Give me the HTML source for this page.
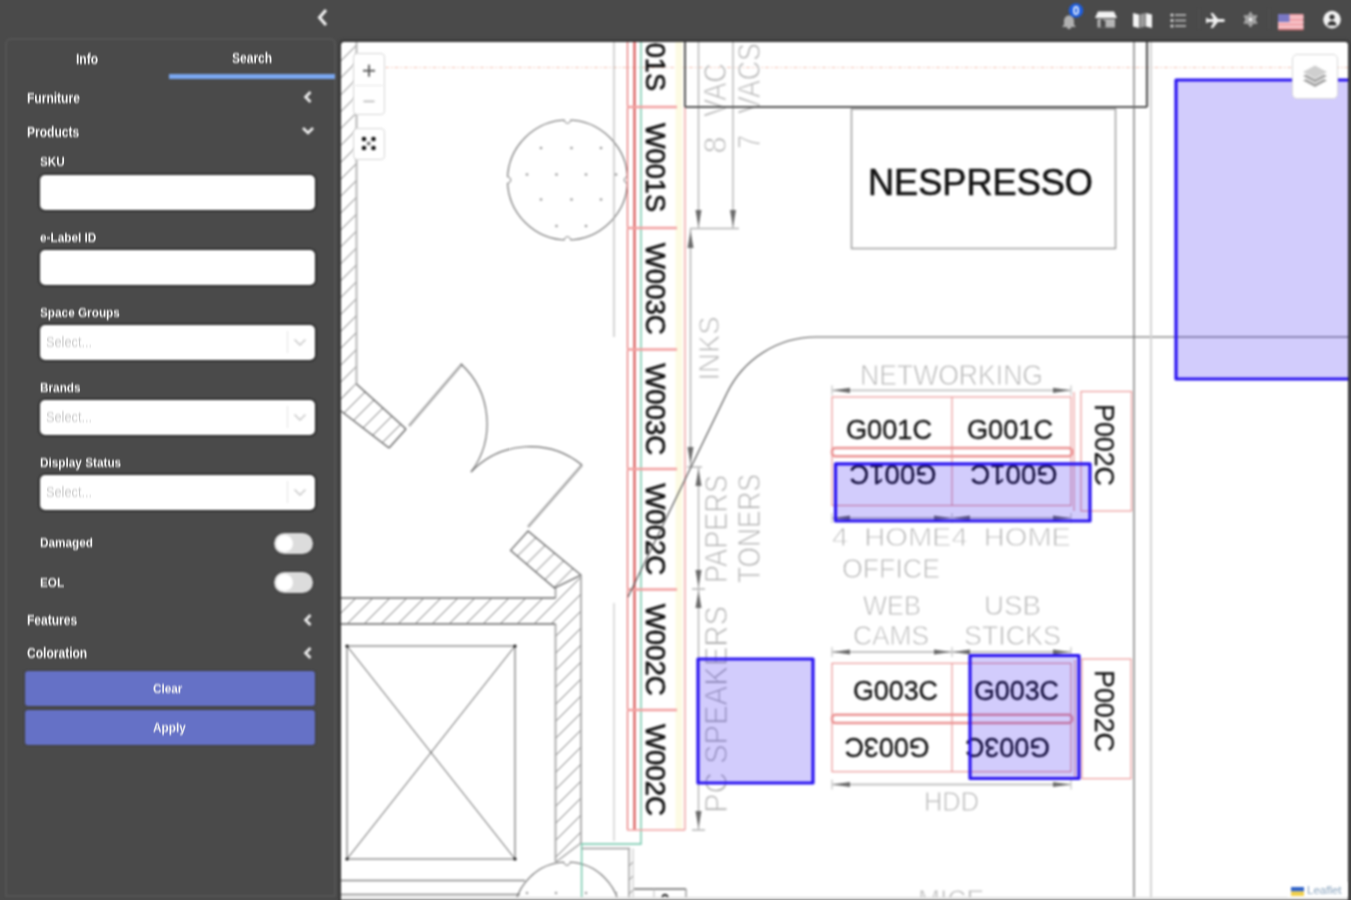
<!DOCTYPE html>
<html><head><meta charset="utf-8">
<style>
*{box-sizing:border-box;margin:0;padding:0}
body>*{filter:blur(0.9px)}
html,body{width:1351px;height:900px;overflow:hidden;background:#4a4a4a;font-family:"Liberation Sans",sans-serif;color:#fff;position:relative}
.abs{position:absolute}
.panel{position:absolute;left:4.5px;top:38px;width:331px;height:859px;border:2px solid #555;border-radius:6px 6px 0 0}
.t{position:absolute;line-height:14px;white-space:nowrap;transform-origin:0 50%}
.inp{position:absolute;left:40px;width:275px;height:35px;background:#fff;border-radius:5px;box-shadow:0 0 0 1.6px #262626}
.tog{position:absolute;left:273.5px;width:39px;height:21px;border-radius:11px;background:#dcdcdc;box-shadow:0 0 0 1px #3c3c3c}
.tog:after{content:"";position:absolute;left:2px;top:2px;width:17px;height:17px;border-radius:50%;background:#fff}
.btn{position:absolute;left:24.5px;width:290px;height:34.5px;background:#6571c6;border-radius:3px;box-shadow:0 0 0 1px #3e3e3e}
.map{position:absolute;left:341px;top:42px;width:1006.5px;height:858px;background:#fff;border-radius:3px 3px 0 0;overflow:hidden;box-shadow:0 0 2px 1.5px #333}
</style></head>
<body>
<!-- top collapse chevron -->
<svg class="abs" style="left:316px;top:8px" width="14" height="20" viewBox="0 0 14 20"><path d="M10 2 L3.5 9.5 L10 17" fill="none" stroke="#f4f4f4" stroke-width="3"/></svg>

<!-- top icons -->
<svg class="abs" style="left:1040px;top:0" width="311" height="40" viewBox="1040 0 311 40">
  <!-- bell -->
  <path d="M1069,15.5 c-3.2,0 -5,2.6 -5,5.6 v3.6 l-2,2.2 h14 l-2,-2.2 v-3.6 c0,-3 -1.8,-5.6 -5,-5.6z" fill="#b0b0b0"/>
  <rect x="1067" y="26.5" width="4" height="2.5" rx="1.2" fill="#b0b0b0"/>
  <circle cx="1076" cy="10.5" r="7.2" fill="#1f5fe0"/>
  <text x="1076" y="14.6" font-size="12" font-weight="bold" fill="#fff" text-anchor="middle" font-family="Liberation Sans, sans-serif">0</text>
  <!-- store -->
  <path d="M1098,11.5 h16 l3,6.5 h-22z" fill="#f2f2f2"/>
  <rect x="1097.5" y="19" width="17.5" height="8.5" fill="#b5b5b5"/>
  <rect x="1100.5" y="20.5" width="5" height="7" fill="#4a4a4a"/>
  <circle cx="1102" cy="20.5" r="1" fill="#222"/>
  <!-- map -->
  <path d="M1133,13 l6,1.5 v13.5 l-6,-1.5z" fill="#f4f4f4"/>
  <path d="M1139.6,14.5 l5.6,-1.5 v13.5 l-5.6,1.5z" fill="#9a9a9a"/>
  <path d="M1145.8,13 l6.2,1.5 v13.5 l-6.2,-1.5z" fill="#f4f4f4"/>
  <!-- list -->
  <circle cx="1172" cy="15" r="1.6" fill="#ddd"/><rect x="1175" y="14" width="11" height="2" fill="#aaa"/>
  <circle cx="1172" cy="20.5" r="1.6" fill="#ddd"/><rect x="1175" y="19.5" width="11" height="2" fill="#aaa"/>
  <circle cx="1172" cy="26" r="1.6" fill="#ddd"/><rect x="1175" y="25" width="11" height="2" fill="#aaa"/>
  <rect x="1198.5" y="9" width="1" height="20" fill="#555"/>
  <!-- plane -->
  <path d="M1206,17.5 l2.5,1.5 h5 l-3,-6 h2.5 l5,6 h4.5 c1.5,0 2.5,0.7 2.5,1.5 s-1,1.5 -2.5,1.5 h-4.5 l-5,6 h-2.5 l3,-6 h-5 l-2.5,1.5z" fill="#f2f2f2"/>
  <!-- gear -->
  <g fill="none" stroke="#a8a8a8" stroke-width="2.2">
   <circle cx="1250.5" cy="19.5" r="4.5"/>
  </g>
  <g stroke="#a8a8a8" stroke-width="2.4">
   <line x1="1250.5" y1="12" x2="1250.5" y2="27"/>
   <line x1="1244" y1="15.8" x2="1257" y2="23.2"/>
   <line x1="1244" y1="23.2" x2="1257" y2="15.8"/>
  </g>
  <circle cx="1250.5" cy="19.5" r="2" fill="#eee"/>
  <rect x="1268.5" y="9" width="1" height="20" fill="#555"/>
  <!-- flag -->
  <rect x="1278" y="14" width="25.5" height="16" fill="#f2a6ad"/>
  <rect x="1278" y="16.5" width="25.5" height="1.6" fill="#f8d0d4"/>
  <rect x="1278" y="21.5" width="25.5" height="1.6" fill="#f8d0d4"/>
  <rect x="1278" y="26" width="25.5" height="1.6" fill="#f8d0d4"/>
  <rect x="1278" y="14" width="11.5" height="8" fill="#7a78c4"/>
  <rect x="1278" y="29.5" width="25.5" height="1" fill="#9a5050"/>
  <!-- user -->
  <circle cx="1332" cy="19.6" r="8.8" fill="#f4f4f4"/>
  <circle cx="1332" cy="17" r="2.6" fill="#333"/>
  <path d="M1327.5,25.5 c0,-3 2,-4.5 4.5,-4.5 s4.5,1.5 4.5,4.5z" fill="#333"/>
</svg>

<div class="panel"></div>
<div class="t" style="left:76px;top:52.35px;font-size:14px;color:#f4f4f4;font-weight:bold;transform:scaleX(0.86);">Info</div>
<div class="t" style="left:232.3px;top:51.35px;font-size:14px;color:#f4f4f4;font-weight:bold;transform:scaleX(0.86);">Search</div>
<div class="abs" style="left:169px;top:74px;width:166px;height:5px;background:#7aa7f0"></div>
<div class="t" style="left:26.7px;top:91.45px;font-size:14px;color:#f4f4f4;font-weight:bold;transform:scaleX(0.86);">Furniture</div>
<div class="t" style="left:26.7px;top:125.45px;font-size:14px;color:#f4f4f4;font-weight:bold;transform:scaleX(0.86);">Products</div>
<div class="t" style="left:40px;top:154.95px;font-size:13.7px;color:#f4f4f4;font-weight:bold;transform:scaleX(0.86);">SKU</div>
<div class="inp" style="top:174.5px"></div>
<div class="t" style="left:40px;top:231.05px;font-size:13.7px;color:#f4f4f4;font-weight:bold;transform:scaleX(0.86);">e-Label ID</div>
<div class="inp" style="top:249.5px"></div>
<div class="t" style="left:40px;top:305.55px;font-size:13.7px;color:#f4f4f4;font-weight:bold;transform:scaleX(0.86);">Space Groups</div>
<div class="inp" style="top:324.5px"></div>
<div class="t" style="left:40px;top:380.75px;font-size:13.7px;color:#f4f4f4;font-weight:bold;transform:scaleX(0.86);">Brands</div>
<div class="inp" style="top:399.5px"></div>
<div class="t" style="left:40px;top:456.25px;font-size:13.7px;color:#f4f4f4;font-weight:bold;transform:scaleX(0.86);">Display Status</div>
<div class="inp" style="top:474.5px"></div>
<div class="t" style="left:46px;top:334.65px;font-size:14.5px;color:#cacaca;font-weight:normal;transform:scaleX(0.88);">Select...</div>
<div class="abs" style="left:287px;top:330.5px;width:1px;height:22px;background:#e4e4e4"></div>
<div class="t" style="left:46px;top:409.65px;font-size:14.5px;color:#cacaca;font-weight:normal;transform:scaleX(0.88);">Select...</div>
<div class="abs" style="left:287px;top:405.5px;width:1px;height:22px;background:#e4e4e4"></div>
<div class="t" style="left:46px;top:484.65px;font-size:14.5px;color:#cacaca;font-weight:normal;transform:scaleX(0.88);">Select...</div>
<div class="abs" style="left:287px;top:480.5px;width:1px;height:22px;background:#e4e4e4"></div>
<div class="t" style="left:40px;top:536.45px;font-size:13.7px;color:#f4f4f4;font-weight:bold;transform:scaleX(0.86);">Damaged</div>
<div class="tog" style="top:532.5px"></div>
<div class="t" style="left:40px;top:576.05px;font-size:13.7px;color:#f4f4f4;font-weight:bold;transform:scaleX(0.86);">EOL</div>
<div class="tog" style="top:572px"></div>
<div class="t" style="left:26.7px;top:613.35px;font-size:14px;color:#f4f4f4;font-weight:bold;transform:scaleX(0.86);">Features</div>
<div class="t" style="left:26.7px;top:646.15px;font-size:14px;color:#f4f4f4;font-weight:bold;transform:scaleX(0.86);">Coloration</div>
<div class="btn" style="top:671px"></div>
<div class="t" style="left:152.5px;top:681.65px;font-size:13.7px;color:#f4f4f4;font-weight:bold;transform:scaleX(0.86);">Clear</div>
<div class="btn" style="top:710px"></div>
<div class="t" style="left:152.5px;top:720.55px;font-size:13.7px;color:#f4f4f4;font-weight:bold;transform:scaleX(0.86);">Apply</div>

<div class="map"><svg style="position:absolute;left:-341px;top:-42px" width="1351" height="900" font-family="Liberation Sans, sans-serif">
<defs><pattern id="h45" patternUnits="userSpaceOnUse" width="17" height="17"><path d="M-17,17 L0,0 M0,17 L17,0 M17,17 L34,0" stroke="#7a7a7a" stroke-width="1"/></pattern><clipPath id="wallclip"><polygon points="341,598 555.5,598 555.5,590 581,577 581,843 555.5,862 555.5,624 341,624"/></clipPath></defs>
<line x1="385" y1="67.5" x2="1349" y2="67.5" stroke="#f4c4b4" stroke-width="1" stroke-dasharray="4 2 1.5 2"/>
<clipPath id="c2"><polygon points="341,42 356.5,42 356.5,384 341,397.5"/></clipPath><g clip-path="url(#c2)" stroke="#6e6e6e" stroke-width="1">
<line x1="-31.6" y1="399.5" x2="327.9" y2="40.0"/>
<line x1="-14.7" y1="399.5" x2="344.8" y2="40.0"/>
<line x1="2.2" y1="399.5" x2="361.7" y2="40.0"/>
<line x1="19.1" y1="399.5" x2="378.6" y2="40.0"/>
<line x1="36.0" y1="399.5" x2="395.5" y2="40.0"/>
<line x1="52.9" y1="399.5" x2="412.4" y2="40.0"/>
<line x1="69.8" y1="399.5" x2="429.3" y2="40.0"/>
<line x1="86.7" y1="399.5" x2="446.2" y2="40.0"/>
<line x1="103.6" y1="399.5" x2="463.1" y2="40.0"/>
<line x1="120.5" y1="399.5" x2="480.0" y2="40.0"/>
<line x1="137.4" y1="399.5" x2="496.9" y2="40.0"/>
<line x1="154.3" y1="399.5" x2="513.8" y2="40.0"/>
<line x1="171.2" y1="399.5" x2="530.7" y2="40.0"/>
<line x1="188.1" y1="399.5" x2="547.6" y2="40.0"/>
<line x1="205.0" y1="399.5" x2="564.5" y2="40.0"/>
<line x1="221.9" y1="399.5" x2="581.4" y2="40.0"/>
<line x1="238.8" y1="399.5" x2="598.3" y2="40.0"/>
<line x1="255.7" y1="399.5" x2="615.2" y2="40.0"/>
<line x1="272.6" y1="399.5" x2="632.1" y2="40.0"/>
<line x1="289.5" y1="399.5" x2="649.0" y2="40.0"/>
<line x1="306.4" y1="399.5" x2="665.9" y2="40.0"/>
<line x1="323.3" y1="399.5" x2="682.8" y2="40.0"/>
<line x1="340.2" y1="399.5" x2="699.7" y2="40.0"/>
</g>
<clipPath id="c27"><polygon points="341,397.5 356.5,384 406,429 389,448 341,411"/></clipPath><g clip-path="url(#c27)" stroke="#6e6e6e" stroke-width="1">
<line x1="273.0" y1="450.0" x2="341.0" y2="382.0"/>
<line x1="290.0" y1="450.0" x2="358.0" y2="382.0"/>
<line x1="307.0" y1="450.0" x2="375.0" y2="382.0"/>
<line x1="324.0" y1="450.0" x2="392.0" y2="382.0"/>
<line x1="341.0" y1="450.0" x2="409.0" y2="382.0"/>
<line x1="358.0" y1="450.0" x2="426.0" y2="382.0"/>
<line x1="375.0" y1="450.0" x2="443.0" y2="382.0"/>
<line x1="392.0" y1="450.0" x2="460.0" y2="382.0"/>
</g>
<clipPath id="c37"><polygon points="528,531 581,575 554.5,588 510.6,550.4"/></clipPath><g clip-path="url(#c37)" stroke="#6e6e6e" stroke-width="1">
<line x1="449.5" y1="590.0" x2="510.5" y2="529.0"/>
<line x1="466.5" y1="590.0" x2="527.5" y2="529.0"/>
<line x1="483.5" y1="590.0" x2="544.5" y2="529.0"/>
<line x1="500.5" y1="590.0" x2="561.5" y2="529.0"/>
<line x1="517.5" y1="590.0" x2="578.5" y2="529.0"/>
<line x1="534.5" y1="590.0" x2="595.5" y2="529.0"/>
<line x1="551.5" y1="590.0" x2="612.5" y2="529.0"/>
<line x1="568.5" y1="590.0" x2="629.5" y2="529.0"/>
</g>
<clipPath id="c47"><polygon points="341,598 555.5,598 555.5,588 581,575 581,843 555.5,862 555.5,624 341,624"/></clipPath><g clip-path="url(#c47)" stroke="#6e6e6e" stroke-width="1">
<line x1="39.0" y1="864.0" x2="330.0" y2="573.0"/>
<line x1="56.0" y1="864.0" x2="347.0" y2="573.0"/>
<line x1="73.0" y1="864.0" x2="364.0" y2="573.0"/>
<line x1="90.0" y1="864.0" x2="381.0" y2="573.0"/>
<line x1="107.0" y1="864.0" x2="398.0" y2="573.0"/>
<line x1="124.0" y1="864.0" x2="415.0" y2="573.0"/>
<line x1="141.0" y1="864.0" x2="432.0" y2="573.0"/>
<line x1="158.0" y1="864.0" x2="449.0" y2="573.0"/>
<line x1="175.0" y1="864.0" x2="466.0" y2="573.0"/>
<line x1="192.0" y1="864.0" x2="483.0" y2="573.0"/>
<line x1="209.0" y1="864.0" x2="500.0" y2="573.0"/>
<line x1="226.0" y1="864.0" x2="517.0" y2="573.0"/>
<line x1="243.0" y1="864.0" x2="534.0" y2="573.0"/>
<line x1="260.0" y1="864.0" x2="551.0" y2="573.0"/>
<line x1="277.0" y1="864.0" x2="568.0" y2="573.0"/>
<line x1="294.0" y1="864.0" x2="585.0" y2="573.0"/>
<line x1="311.0" y1="864.0" x2="602.0" y2="573.0"/>
<line x1="328.0" y1="864.0" x2="619.0" y2="573.0"/>
<line x1="345.0" y1="864.0" x2="636.0" y2="573.0"/>
<line x1="362.0" y1="864.0" x2="653.0" y2="573.0"/>
<line x1="379.0" y1="864.0" x2="670.0" y2="573.0"/>
<line x1="396.0" y1="864.0" x2="687.0" y2="573.0"/>
<line x1="413.0" y1="864.0" x2="704.0" y2="573.0"/>
<line x1="430.0" y1="864.0" x2="721.0" y2="573.0"/>
<line x1="447.0" y1="864.0" x2="738.0" y2="573.0"/>
<line x1="464.0" y1="864.0" x2="755.0" y2="573.0"/>
<line x1="481.0" y1="864.0" x2="772.0" y2="573.0"/>
<line x1="498.0" y1="864.0" x2="789.0" y2="573.0"/>
<line x1="515.0" y1="864.0" x2="806.0" y2="573.0"/>
<line x1="532.0" y1="864.0" x2="823.0" y2="573.0"/>
<line x1="549.0" y1="864.0" x2="840.0" y2="573.0"/>
<line x1="566.0" y1="864.0" x2="857.0" y2="573.0"/>
</g>
<line x1="356.5" y1="42.0" x2="356.5" y2="384.0" stroke="#b0b0b0" stroke-width="1.8" />
<line x1="356.5" y1="384.0" x2="406.0" y2="429.0" stroke="#5a5a5a" stroke-width="1.2" />
<line x1="341.0" y1="411.0" x2="389.0" y2="448.0" stroke="#5a5a5a" stroke-width="1.2" />
<line x1="406.0" y1="429.0" x2="389.0" y2="448.0" stroke="#5a5a5a" stroke-width="1.2" />
<line x1="409.0" y1="426.0" x2="462.0" y2="364.0" stroke="#888" stroke-width="2.2" />
<line x1="409.0" y1="426.0" x2="462.0" y2="364.0" stroke="#fff" stroke-width="0.6" />
<path d="M461,364 A81,81 0 0 1 471,472" fill="none" stroke="#666" stroke-width="1.1"/>
<line x1="528.0" y1="527.0" x2="582.0" y2="465.0" stroke="#888" stroke-width="2.2" />
<line x1="528.0" y1="527.0" x2="582.0" y2="465.0" stroke="#fff" stroke-width="0.6" />
<path d="M471,472 A82,82 0 0 1 582,465" fill="none" stroke="#666" stroke-width="1.1"/>
<polygon points="528,531 581,575 554.5,588 510.6,550.4" fill="none" stroke="#5a5a5a" stroke-width="1.2"/>
<line x1="581.0" y1="575.0" x2="581.0" y2="843.0" stroke="#a8a8a8" stroke-width="1.8" />
<line x1="555.5" y1="588.0" x2="555.5" y2="598.0" stroke="#999" stroke-width="1.6" />
<line x1="555.5" y1="624.0" x2="555.5" y2="862.0" stroke="#a8a8a8" stroke-width="1.8" />
<line x1="341.0" y1="598.0" x2="555.5" y2="598.0" stroke="#8a8a8a" stroke-width="1.8" />
<line x1="341.0" y1="624.0" x2="555.5" y2="624.0" stroke="#8a8a8a" stroke-width="1.8" />
<rect x="347" y="646" width="168" height="213" fill="none" stroke="#777" stroke-width="1.2" />
<line x1="347.0" y1="646.0" x2="515.0" y2="859.0" stroke="#555" stroke-width="1" />
<line x1="515.0" y1="646.0" x2="347.0" y2="859.0" stroke="#555" stroke-width="1" />
<circle cx="347" cy="646" r="1.6" fill="#111"/>
<circle cx="515" cy="646" r="1.6" fill="#111"/>
<circle cx="347" cy="859" r="1.6" fill="#111"/>
<circle cx="515" cy="859" r="1.6" fill="#111"/>
<line x1="341.0" y1="880.5" x2="525.0" y2="880.5" stroke="#888" stroke-width="1.4" />
<line x1="341.0" y1="894.5" x2="520.0" y2="894.5" stroke="#888" stroke-width="1.4" />
<circle cx="567.5" cy="180" r="60" fill="none" stroke="#666" stroke-width="1.1"/>
<circle cx="541" cy="148" r="1.3" fill="#999"/>
<circle cx="571.5" cy="148" r="1.3" fill="#999"/>
<circle cx="601" cy="148" r="1.3" fill="#999"/>
<circle cx="527" cy="174.5" r="1.3" fill="#999"/>
<circle cx="556.5" cy="174.5" r="1.3" fill="#999"/>
<circle cx="586" cy="174.5" r="1.3" fill="#999"/>
<circle cx="616" cy="174.5" r="1.3" fill="#999"/>
<circle cx="541" cy="199.5" r="1.3" fill="#999"/>
<circle cx="571.5" cy="199.5" r="1.3" fill="#999"/>
<circle cx="601" cy="199.5" r="1.3" fill="#999"/>
<circle cx="556.5" cy="226" r="1.3" fill="#999"/>
<circle cx="586" cy="226" r="1.3" fill="#999"/>
<circle cx="567.5" cy="120" r="3.0" fill="#fff"/>
<path d="M564.3,120.0 C564.3,124.3 570.7,124.3 570.7,120.0" fill="none" stroke="#777" stroke-width="1"/>
<circle cx="567.5" cy="240" r="3.0" fill="#fff"/>
<path d="M570.7,240.0 C570.7,235.7 564.3,235.7 564.3,240.0" fill="none" stroke="#777" stroke-width="1"/>
<circle cx="507.5" cy="180" r="3.0" fill="#fff"/>
<path d="M507.5,183.2 C511.8,183.2 511.8,176.8 507.5,176.8" fill="none" stroke="#777" stroke-width="1"/>
<circle cx="627.5" cy="180" r="3.0" fill="#fff"/>
<path d="M627.5,176.8 C623.2,176.8 623.2,183.2 627.5,183.2" fill="none" stroke="#777" stroke-width="1"/>
<circle cx="567" cy="915" r="53" fill="none" stroke="#666" stroke-width="1.1"/>
<circle cx="567" cy="862" r="3.0" fill="#fff"/>
<path d="M563.8,862.0 C563.8,866.3 570.2,866.3 570.2,862.0" fill="none" stroke="#777" stroke-width="1"/>
<line x1="614.0" y1="42.0" x2="614.0" y2="337.0" stroke="#aaa" stroke-width="1" />
<line x1="614.0" y1="603.0" x2="614.0" y2="841.0" stroke="#bbb" stroke-width="1" />
<path d="M581.6,900 L581.6,844 L641,844 L641,42" fill="none" stroke="#6cc4a6" stroke-width="1.4"/>
<line x1="582.0" y1="848.5" x2="630.0" y2="848.5" stroke="#9a9a9a" stroke-width="1.6" />
<line x1="629.0" y1="848.5" x2="629.0" y2="900.0" stroke="#a0a0a0" stroke-width="1.5" />
<line x1="633.0" y1="848.5" x2="633.0" y2="900.0" stroke="#c8c8c8" stroke-width="1.2" />
<line x1="629.0" y1="866.0" x2="633.0" y2="862.0" stroke="#888" stroke-width="1" />
<line x1="629.0" y1="880.0" x2="633.0" y2="876.0" stroke="#888" stroke-width="1" />
<line x1="629.0" y1="894.0" x2="633.0" y2="890.0" stroke="#888" stroke-width="1" />
<line x1="634.0" y1="889.0" x2="686.0" y2="889.0" stroke="#8a8a8a" stroke-width="2" />
<line x1="686.0" y1="889.0" x2="686.0" y2="900.0" stroke="#999" stroke-width="1.4" />
<line x1="654.0" y1="889.0" x2="654.0" y2="900.0" stroke="#bbb" stroke-width="1" />
<path d="M662,900 C662,893 668,893 668,900" fill="none" stroke="#222" stroke-width="1.8"/>
<circle cx="527" cy="893" r="1.2" fill="#999"/>
<circle cx="556" cy="893" r="1.2" fill="#999"/>
<circle cx="586" cy="893" r="1.2" fill="#999"/>
<circle cx="616" cy="893" r="1.2" fill="#999"/>
<line x1="556.0" y1="862.0" x2="581.0" y2="843.0" stroke="#999" stroke-width="1.2" />
<line x1="627.5" y1="42.0" x2="627.5" y2="830.0" stroke="#e46a6a" stroke-width="1.2" />
<line x1="634.5" y1="42.0" x2="634.5" y2="830.0" stroke="#d85555" stroke-width="2.2" />
<line x1="679.0" y1="42.0" x2="679.0" y2="830.0" stroke="#fdfbe4" stroke-width="7" />
<line x1="685.0" y1="107.0" x2="685.0" y2="830.0" stroke="#eea2a2" stroke-width="1.4" />
<line x1="685.0" y1="42.0" x2="685.0" y2="107.0" stroke="#555" stroke-width="2" />
<line x1="627.0" y1="830.0" x2="685.0" y2="830.0" stroke="#f0a0a0" stroke-width="1.5" />
<line x1="627.0" y1="107.0" x2="677.0" y2="107.0" stroke="#f2a0a0" stroke-width="2.6" />
<line x1="627.0" y1="228.0" x2="677.0" y2="228.0" stroke="#f2a0a0" stroke-width="2.6" />
<line x1="627.0" y1="349.5" x2="677.0" y2="349.5" stroke="#f2a0a0" stroke-width="2.6" />
<line x1="627.0" y1="469.0" x2="677.0" y2="469.0" stroke="#f2a0a0" stroke-width="2.6" />
<line x1="627.0" y1="589.5" x2="677.0" y2="589.5" stroke="#f2a0a0" stroke-width="2.6" />
<line x1="627.0" y1="710.0" x2="677.0" y2="710.0" stroke="#f2a0a0" stroke-width="2.6" />
<text transform="translate(646,2.0) rotate(90)" font-size="27.5" fill="#111" textLength="89" lengthAdjust="spacingAndGlyphs" stroke="#111" stroke-width="0.7">W001S</text>
<text transform="translate(646,123.0) rotate(90)" font-size="27.5" fill="#111" textLength="89" lengthAdjust="spacingAndGlyphs" stroke="#111" stroke-width="0.7">W001S</text>
<text transform="translate(646,242.75) rotate(90)" font-size="27.5" fill="#111" textLength="92" lengthAdjust="spacingAndGlyphs" stroke="#111" stroke-width="0.7">W003C</text>
<text transform="translate(646,363.25) rotate(90)" font-size="27.5" fill="#111" textLength="92" lengthAdjust="spacingAndGlyphs" stroke="#111" stroke-width="0.7">W003C</text>
<text transform="translate(646,483.25) rotate(90)" font-size="27.5" fill="#111" textLength="92" lengthAdjust="spacingAndGlyphs" stroke="#111" stroke-width="0.7">W002C</text>
<text transform="translate(646,603.75) rotate(90)" font-size="27.5" fill="#111" textLength="92" lengthAdjust="spacingAndGlyphs" stroke="#111" stroke-width="0.7">W002C</text>
<text transform="translate(646,724.0) rotate(90)" font-size="27.5" fill="#111" textLength="92" lengthAdjust="spacingAndGlyphs" stroke="#111" stroke-width="0.7">W002C</text>
<line x1="698.5" y1="42.0" x2="698.5" y2="228.0" stroke="#b0b0b0" stroke-width="1.3" />
<line x1="733.0" y1="42.0" x2="733.0" y2="228.0" stroke="#b0b0b0" stroke-width="1.3" />
<polygon points="698.5,227 695.5,210 701.5,210" fill="#6a6a6a"/>
<polygon points="733,227 730,210 736,210" fill="#6a6a6a"/>
<line x1="690.0" y1="228.5" x2="739.0" y2="228.5" stroke="#b4b4b4" stroke-width="1.6" />
<line x1="690.5" y1="229.0" x2="690.5" y2="466.0" stroke="#b4b4b4" stroke-width="1.5" />
<polygon points="690.5,231 687.5,248 693.5,248" fill="#6a6a6a"/>
<polygon points="690.5,464 687.5,447 693.5,447" fill="#6a6a6a"/>
<line x1="687.0" y1="467.0" x2="702.0" y2="467.0" stroke="#b4b4b4" stroke-width="1.3" />
<line x1="698.5" y1="467.0" x2="698.5" y2="830.0" stroke="#b4b4b4" stroke-width="1.4" />
<polygon points="698.5,469 695.5,486 701.5,486" fill="#6a6a6a"/>
<polygon points="698.5,587 695.5,570 701.5,570" fill="#6a6a6a"/>
<line x1="692.0" y1="589.0" x2="705.0" y2="589.0" stroke="#b4b4b4" stroke-width="1.3" />
<polygon points="698.5,591 695.5,608 701.5,608" fill="#6a6a6a"/>
<polygon points="698.5,828 695.5,811 701.5,811" fill="#6a6a6a"/>
<line x1="692.0" y1="830.0" x2="705.0" y2="830.0" stroke="#b4b4b4" stroke-width="1.5" />
<text transform="translate(726,153.5) rotate(-90)" font-size="31" fill="#b4b4b4" textLength="17" lengthAdjust="spacingAndGlyphs" stroke="#fff" stroke-width="0.9">8</text>
<text transform="translate(726,117) rotate(-90)" font-size="31" fill="#b4b4b4" textLength="54" lengthAdjust="spacingAndGlyphs" stroke="#fff" stroke-width="0.9">VAC</text>
<text transform="translate(760,149) rotate(-90)" font-size="31" fill="#b4b4b4" textLength="14" lengthAdjust="spacingAndGlyphs" stroke="#fff" stroke-width="0.9">7</text>
<text transform="translate(760,114) rotate(-90)" font-size="31" fill="#b4b4b4" textLength="71" lengthAdjust="spacingAndGlyphs" stroke="#fff" stroke-width="0.9">VACS</text>
<text transform="translate(718.5,380.5) rotate(-90)" font-size="30" fill="#b4b4b4" textLength="64" lengthAdjust="spacingAndGlyphs" stroke="#fff" stroke-width="0.9">INKS</text>
<text transform="translate(726.5,583) rotate(-90)" font-size="31" fill="#b4b4b4" textLength="108" lengthAdjust="spacingAndGlyphs" stroke="#fff" stroke-width="0.9">PAPERS</text>
<text transform="translate(760,583) rotate(-90)" font-size="31" fill="#b4b4b4" textLength="109" lengthAdjust="spacingAndGlyphs" stroke="#fff" stroke-width="0.9">TONERS</text>
<text transform="translate(726.5,813) rotate(-90)" font-size="31" fill="#b4b4b4" textLength="207" lengthAdjust="spacingAndGlyphs" stroke="#fff" stroke-width="0.9">PC SPEAKERS</text>
<path d="M628,597 L727,393 C743.5,358.9 778.1,337 816,337 L1349,337" fill="none" stroke="#555" stroke-width="1.2"/>
<line x1="685.0" y1="107.0" x2="1147.0" y2="107.0" stroke="#555" stroke-width="2.2" />
<line x1="1147.0" y1="42.0" x2="1147.0" y2="107.0" stroke="#555" stroke-width="2.2" />
<line x1="1134.0" y1="42.0" x2="1134.0" y2="900.0" stroke="#707070" stroke-width="1.3" />
<line x1="1151.0" y1="42.0" x2="1151.0" y2="900.0" stroke="#d4d4d4" stroke-width="2" />
<rect x="851.5" y="109" width="264.0" height="139.5" fill="none" stroke="#a0a0a0" stroke-width="1.5" />
<text x="868" y="195" font-size="36" fill="#111" textLength="225" lengthAdjust="spacingAndGlyphs" stroke="#111" stroke-width="0.6">NESPRESSO</text>
<rect x="832" y="397" width="239" height="108.5" fill="none" stroke="#ec9a9a" stroke-width="1.2" />
<line x1="952.0" y1="397.0" x2="952.0" y2="505.5" stroke="#ec9a9a" stroke-width="1.2" />
<rect x="832" y="448" width="240" height="8.300000000000011" fill="none" stroke="#eb9494" stroke-width="2.6" rx="3.5"/>
<text x="846" y="439" font-size="27" fill="#111" textLength="86" lengthAdjust="spacingAndGlyphs" stroke="#111" stroke-width="0.3">G001C</text>
<text x="967" y="439" font-size="27" fill="#111" textLength="86" lengthAdjust="spacingAndGlyphs" stroke="#111" stroke-width="0.3">G001C</text>
<text transform="translate(936.5,465) rotate(180)" font-size="28" fill="#111" textLength="87" lengthAdjust="spacingAndGlyphs" stroke="#111" stroke-width="0.3">G001C</text>
<text transform="translate(1057.5,465) rotate(180)" font-size="28" fill="#111" textLength="87" lengthAdjust="spacingAndGlyphs" stroke="#111" stroke-width="0.3">G001C</text>
<rect x="1081" y="391.5" width="50.5" height="119.5" fill="none" stroke="#ec9a9a" stroke-width="1.2" />
<line x1="1074.0" y1="392.0" x2="1074.0" y2="511.0" stroke="#ec9a9a" stroke-width="1.2" />
<text transform="translate(1095,404) rotate(90)" font-size="28" fill="#111" textLength="82" lengthAdjust="spacingAndGlyphs" stroke="#111" stroke-width="0.3">P002C</text>
<line x1="832.0" y1="390.3" x2="1071.0" y2="390.3" stroke="#c2c2c2" stroke-width="1.8" />
<polygon points="833,390.3 850,387.7 850,392.90000000000003" fill="#6a6a6a"/>
<polygon points="1070,390.3 1053,387.7 1053,392.90000000000003" fill="#6a6a6a"/>
<line x1="832.0" y1="385.3" x2="832.0" y2="395.3" stroke="#bbb" stroke-width="1" />
<line x1="1071.0" y1="385.3" x2="1071.0" y2="395.3" stroke="#bbb" stroke-width="1" />
<text x="860" y="385" font-size="29" fill="#b4b4b4" textLength="183" lengthAdjust="spacingAndGlyphs" stroke="#fff" stroke-width="0.9">NETWORKING</text>
<line x1="832.0" y1="518.0" x2="1071.0" y2="518.0" stroke="#c2c2c2" stroke-width="1.8" />
<polygon points="833,518 850,515.4 850,520.6" fill="#6a6a6a"/>
<polygon points="1070,518 1053,515.4 1053,520.6" fill="#6a6a6a"/>
<line x1="832.0" y1="513.0" x2="832.0" y2="523.0" stroke="#bbb" stroke-width="1" />
<line x1="1071.0" y1="513.0" x2="1071.0" y2="523.0" stroke="#bbb" stroke-width="1" />
<line x1="952.0" y1="513.0" x2="952.0" y2="523.0" stroke="#bbb" stroke-width="1" />
<polygon points="951,518 934,515.4 934,520.6" fill="#6a6a6a"/>
<polygon points="953,518 970,515.4 970,520.6" fill="#6a6a6a"/>
<text x="832" y="546" font-size="26" fill="#b4b4b4" textLength="239" lengthAdjust="spacingAndGlyphs" xml:space="preserve" stroke="#fff" stroke-width="0.9">4  HOME4  HOME</text>
<text x="842" y="578" font-size="27" fill="#b4b4b4" textLength="98" lengthAdjust="spacingAndGlyphs" stroke="#fff" stroke-width="0.9">OFFICE</text>
<text x="863" y="615" font-size="27" fill="#b4b4b4" textLength="58" lengthAdjust="spacingAndGlyphs" stroke="#fff" stroke-width="0.9">WEB</text>
<text x="853" y="645" font-size="27" fill="#b4b4b4" textLength="76" lengthAdjust="spacingAndGlyphs" stroke="#fff" stroke-width="0.9">CAMS</text>
<text x="984" y="615" font-size="27" fill="#b4b4b4" textLength="57" lengthAdjust="spacingAndGlyphs" stroke="#fff" stroke-width="0.9">USB</text>
<text x="964" y="645" font-size="27" fill="#b4b4b4" textLength="97" lengthAdjust="spacingAndGlyphs" stroke="#fff" stroke-width="0.9">STICKS</text>
<line x1="832.0" y1="652.0" x2="1071.0" y2="652.0" stroke="#c2c2c2" stroke-width="1.8" />
<polygon points="833,652 850,649.4 850,654.6" fill="#6a6a6a"/>
<polygon points="1070,652 1053,649.4 1053,654.6" fill="#6a6a6a"/>
<line x1="832.0" y1="647.0" x2="832.0" y2="657.0" stroke="#bbb" stroke-width="1" />
<line x1="1071.0" y1="647.0" x2="1071.0" y2="657.0" stroke="#bbb" stroke-width="1" />
<line x1="952.0" y1="647.0" x2="952.0" y2="657.0" stroke="#bbb" stroke-width="1" />
<polygon points="951,652 934,649.4 934,654.6" fill="#6a6a6a"/>
<polygon points="953,652 970,649.4 970,654.6" fill="#6a6a6a"/>
<rect x="832" y="663.3" width="239" height="108.40000000000009" fill="none" stroke="#ec9a9a" stroke-width="1.2" />
<line x1="952.0" y1="663.3" x2="952.0" y2="771.7" stroke="#ec9a9a" stroke-width="1.2" />
<rect x="832" y="714.7" width="240" height="8.299999999999955" fill="none" stroke="#eb9494" stroke-width="2.6" rx="3.5"/>
<text x="853" y="699.5" font-size="27" fill="#111" textLength="85" lengthAdjust="spacingAndGlyphs" stroke="#111" stroke-width="0.3">G003C</text>
<text x="974" y="699.5" font-size="27" fill="#111" textLength="85" lengthAdjust="spacingAndGlyphs" stroke="#111" stroke-width="0.3">G003C</text>
<text transform="translate(929.5,738.3) rotate(180)" font-size="27" fill="#111" textLength="85" lengthAdjust="spacingAndGlyphs" stroke="#111" stroke-width="0.3">G003C</text>
<text transform="translate(1050,738.3) rotate(180)" font-size="27" fill="#111" textLength="85" lengthAdjust="spacingAndGlyphs" stroke="#111" stroke-width="0.3">G003C</text>
<rect x="1082" y="659" width="49" height="119.60000000000002" fill="none" stroke="#ec9a9a" stroke-width="1.2" />
<line x1="1075.0" y1="660.0" x2="1075.0" y2="778.0" stroke="#ec9a9a" stroke-width="1.2" />
<text transform="translate(1095,670) rotate(90)" font-size="28" fill="#111" textLength="82" lengthAdjust="spacingAndGlyphs" stroke="#111" stroke-width="0.3">P002C</text>
<line x1="832.0" y1="784.5" x2="1071.0" y2="784.5" stroke="#c2c2c2" stroke-width="1.8" />
<polygon points="833,784.5 850,781.9 850,787.1" fill="#6a6a6a"/>
<polygon points="1070,784.5 1053,781.9 1053,787.1" fill="#6a6a6a"/>
<line x1="832.0" y1="779.5" x2="832.0" y2="789.5" stroke="#bbb" stroke-width="1" />
<line x1="1071.0" y1="779.5" x2="1071.0" y2="789.5" stroke="#bbb" stroke-width="1" />
<text x="924" y="811" font-size="27" fill="#b4b4b4" textLength="55" lengthAdjust="spacingAndGlyphs" stroke="#fff" stroke-width="0.9">HDD</text>
<text x="918" y="910" font-size="30" fill="#b4b4b4" textLength="66" lengthAdjust="spacingAndGlyphs" stroke="#fff" stroke-width="0.9">MICE</text>
<rect x="1176" y="80" width="184" height="299" fill="rgba(30,0,240,0.2)" stroke="#2a14f0" stroke-width="3.2" stroke-linejoin="round"/>
<rect x="698" y="659" width="115" height="124" fill="rgba(30,0,240,0.2)" stroke="#2a14f0" stroke-width="3.2" stroke-linejoin="round"/>
<rect x="835.5" y="463.8" width="254.5" height="57.19999999999999" fill="rgba(30,0,240,0.2)" stroke="#2a14f0" stroke-width="3.2" stroke-linejoin="round"/>
<rect x="970" y="655.5" width="109" height="123.0" fill="rgba(30,0,240,0.2)" stroke="#2a14f0" stroke-width="3.2" stroke-linejoin="round"/>
<rect x="341" y="897" width="1010" height="3" fill="#e2e2e2"/>
</svg></div>
<svg class="abs" style="left:302px;top:90px" width="12" height="14" viewBox="0 0 12 14"><path d="M8.5,2 L3.5,7 L8.5,12" fill="none" stroke="#f2f2f2" stroke-width="2.6"/></svg><svg class="abs" style="left:301px;top:125px" width="14" height="12" viewBox="0 0 14 12"><path d="M2,3 L7,8 L12,3" fill="none" stroke="#f2f2f2" stroke-width="2.6"/></svg><svg class="abs" style="left:302px;top:613px" width="12" height="14" viewBox="0 0 12 14"><path d="M8.5,2 L3.5,7 L8.5,12" fill="none" stroke="#f2f2f2" stroke-width="2.6"/></svg><svg class="abs" style="left:302px;top:646px" width="12" height="14" viewBox="0 0 12 14"><path d="M8.5,2 L3.5,7 L8.5,12" fill="none" stroke="#f2f2f2" stroke-width="2.6"/></svg><svg class="abs" style="left:293px;top:337.5px" width="14" height="9" viewBox="0 0 14 9"><path d="M1.5,1.5 L7,7 L12.5,1.5" fill="none" stroke="#c4c4c4" stroke-width="1.4"/></svg><svg class="abs" style="left:293px;top:412.5px" width="14" height="9" viewBox="0 0 14 9"><path d="M1.5,1.5 L7,7 L12.5,1.5" fill="none" stroke="#c4c4c4" stroke-width="1.4"/></svg><svg class="abs" style="left:293px;top:487.5px" width="14" height="9" viewBox="0 0 14 9"><path d="M1.5,1.5 L7,7 L12.5,1.5" fill="none" stroke="#c4c4c4" stroke-width="1.4"/></svg><div class="abs" style="left:353px;top:53px;width:32px;height:62px;border:1.5px solid #d6d6d6;border-radius:4px;background:#fff"></div>
<div class="abs" style="left:355px;top:85px;width:28px;height:1px;background:#e6e6e6"></div>
<svg class="abs" style="left:353px;top:53px" width="32" height="62"><rect x="10" y="16.8" width="12" height="1.8" fill="#555"/><rect x="15.1" y="11.7" width="1.8" height="12" fill="#555"/><rect x="10.5" y="47.5" width="11" height="1.8" fill="#bdbdbd"/></svg>
<div class="abs" style="left:353px;top:128px;width:32px;height:32px;border:1.5px solid #d6d6d6;border-radius:4px;background:#fff"></div>
<svg class="abs" style="left:353px;top:128px" width="32" height="32"><g fill="#111"><circle cx="11" cy="11" r="2.3"/><circle cx="20.5" cy="11" r="2.3"/><circle cx="11" cy="20" r="2.3"/><circle cx="20.5" cy="20" r="2.3"/></g><circle cx="15.7" cy="15.5" r="2" fill="#777"/></svg>
<div class="abs" style="left:1292px;top:54px;width:46px;height:45px;border:1.5px solid #d8d8d8;border-radius:5px;background:#fff"></div>
<svg class="abs" style="left:1292px;top:54px" width="46" height="45"><g fill="#a4a4a4"><path d="M23,33 L11,26.5 L14,25 L23,29.8 L32,25 L35,26.5z"/><path d="M23,28.5 L11,22 L14,20.5 L23,25.3 L32,20.5 L35,22z"/></g><path d="M23,24.5 L11,18 L23,11.5 L35,18z" fill="#cfcfcf"/></svg>
<div class="abs" style="left:1287px;top:882px;width:60px;height:15px;background:rgba(255,255,255,0.8)"></div>
<svg class="abs" style="left:1291px;top:886.5px" width="13" height="9"><rect width="13" height="4.5" fill="#2f62c8"/><rect y="4.5" width="13" height="4.5" fill="#f2d048"/></svg>
<div class="abs" style="left:1307px;top:882.5px;font-size:11.5px;color:#8aa4be;font-family:'Liberation Sans',sans-serif;line-height:14px">Leaflet</div>
</body></html>
